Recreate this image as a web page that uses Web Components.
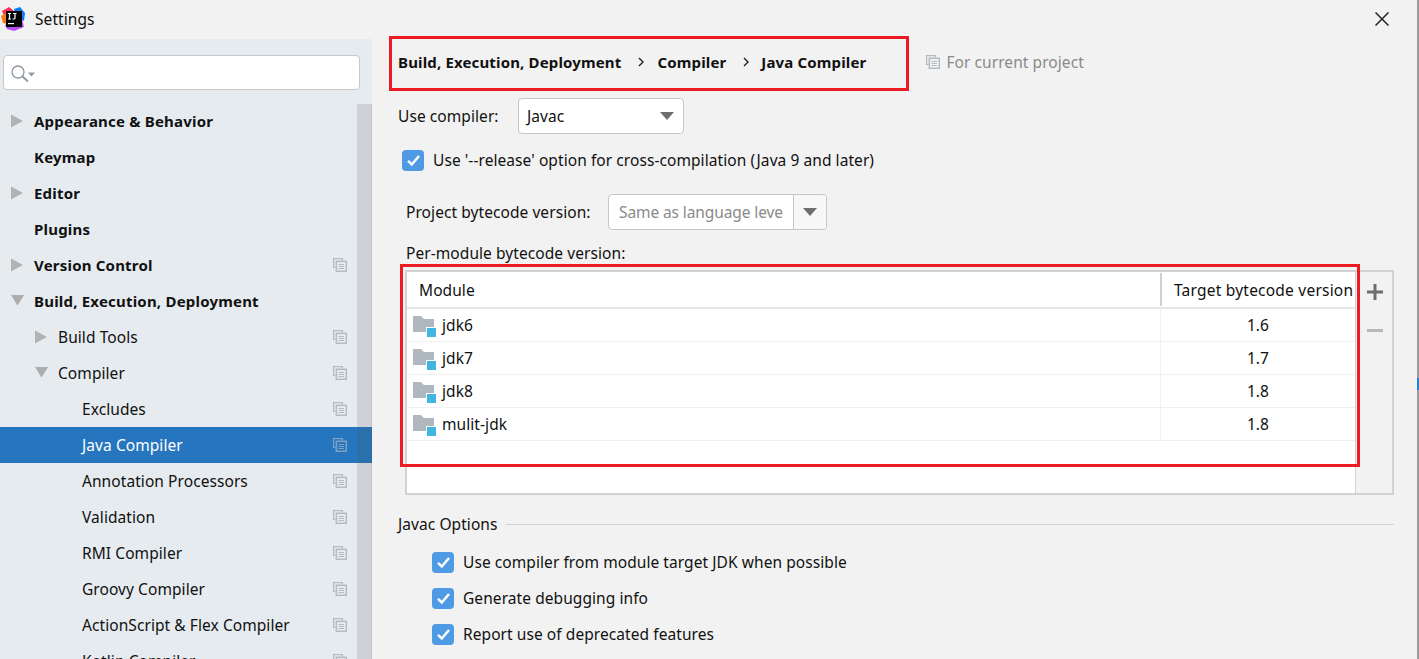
<!DOCTYPE html>
<html><head><meta charset="utf-8">
<style>
html,body{margin:0;padding:0;width:1419px;height:659px;overflow:hidden;background:#f2f2f2;font:15.5px "Noto Sans","Noto Sans CJK SC",sans-serif;letter-spacing:.07px;color:#111}
</style></head><body>
<settings-window></settings-window>
<script>
const copyIcon=`<svg style="display:block;flex:none" width="14" height="14" viewBox="0 0 14 14" fill="none" stroke="#b2bbc4"><path d="M9.500 2.500V.6H.6V9.500H2.500" stroke-width="1.200"/><rect x="3.300" y="3.300" width="10" height="10" stroke-width="1.500"/><path d="M5.500 6.500h5.500M5.500 8.500h5.500M5.500 10.500h5.500" stroke-width="1"/></svg>`;
function def(name,html,cls){customElements.define(name,class extends HTMLElement{constructor(){super();this.attachShadow({mode:'open'}).innerHTML=html;cls&&cls.call(this)}})}

def('tree-row',`<style>
:host{display:flex;align-items:center;height:36px;flex:none;position:relative;color:#111}
:host([sel]){background:#2675bf;color:#fff}
:host([bold]){font-weight:700;font-size:15px;letter-spacing:.2px}
.a{width:14px;height:14px;display:block;flex:none}
.t{white-space:nowrap}
.c{position:absolute;left:333px;top:11px;display:none}
:host([copy]) .c{display:block}
:host([sel]) .c{opacity:.65}
</style><span id="p" style="display:flex;align-items:center;flex:none"></span><span class="t"><slot></slot></span><span class="c">${copyIcon}</span>`,function(){
 const l=+(this.getAttribute('level')||0),ar=this.getAttribute('arrow');
 const p=this.shadowRoot.getElementById('p');
 const ind=34+l*24;p.style.width=ind+'px';
 if(ar){p.innerHTML=`<svg class="a" style="margin-left:${ind-23}px" viewBox="0 0 14 14"><path fill="${ar=='r'?'#b2b2b2':'#acacac'}" d="${ar=='r'?'M0 .5L12 7L0 13.500Z':'M0 1H13L6.500 11.500Z'}"/></svg>`}
});

def('side-bar',`<style>
:host{display:flex;flex-direction:column;width:372px;height:100%;background:#e6ebf0;flex:none;position:relative;overflow:hidden}
.s{margin:16px 0 13px 3px;width:357px;height:35px;box-sizing:border-box;background:#fff;border:1px solid #c8c8c8;border-radius:4px;flex:none;display:flex;align-items:center;padding-left:7px}
.tree{display:flex;flex-direction:column;flex:1;min-height:0}
.sb{position:absolute;left:357px;top:65px;bottom:0;width:15px;background:rgba(80,80,80,.16)}
.sb:after{content:"";position:absolute;right:0;top:0;bottom:0;width:1px;background:rgba(80,80,80,.1)}
</style><div class="s"><svg width="26" height="20" viewBox="0 0 26 20" fill="none"><circle cx="7" cy="9" r="6" stroke="#8f979e" stroke-width="1.300"/><path d="M11.500 13.500l5.500 5" stroke="#8f979e" stroke-width="1.800"/><path fill="#8f979e" d="M17 9.500h7L20.500 13.500Z"/></svg></div>
<div class="tree"><slot></slot></div><div class="sb"></div>`);

def('combo-box',`<style>
:host{display:inline-flex;height:36px;box-sizing:border-box;border:1px solid #c6c6c6;border-radius:4px;background:#fff;align-items:center;flex:none;position:relative;overflow:hidden}
.t{flex:1;padding-left:8px;white-space:nowrap;overflow:hidden}
:host([gray]) .t{color:#8a8a8a;padding-left:10px;letter-spacing:-.1px}
.b{width:32px;height:100%;display:flex;align-items:center;justify-content:center;flex:none}
:host([gray]) .b{border-left:1px solid #c6c6c6;background:#f7f7f7}
</style><span class="t"><slot></slot></span><span class="b"><svg width="14" height="8" viewBox="0 0 14 8"><path fill="#6e6e6e" d="M0 0H14L7 8Z"/></svg></span>`);

def('check-box',`<style>
:host{display:flex;align-items:center;height:36px;white-space:nowrap}
.b{width:22px;height:21px;background:#4f9ae4;border-radius:4px;display:flex;align-items:center;justify-content:center;margin-right:9px;flex:none}
</style><span class="b"><svg width="15" height="13" viewBox="0 0 15 13" fill="none"><path d="M2 6.800L5.800 10.500L13 2" stroke="#fff" stroke-width="2.500"/></svg></span><span><slot></slot></span>`);

def('module-row',`<style>
:host{display:flex;height:33px;box-sizing:border-box;border-bottom:1px solid #f0f0f0;align-items:stretch;flex:none}
.n{width:754px;box-sizing:border-box;border-right:1px solid #f0f0f0;display:flex;align-items:center;padding-left:6px;flex:none}
.v{flex:1;text-align:center;align-self:center}
svg{margin-right:6px;flex:none}
</style><span class="n"><svg width="23" height="23" viewBox="0 0 23 23"><path fill="#afb8bf" d="M0 2H8L11 5H21V18H0Z"/><rect x="13" y="13" width="10" height="10" fill="#fff"/><rect x="14" y="14" width="9" height="9" fill="#40b6e0"/></svg><slot name="n"></slot></span><span class="v"><slot name="v"></slot></span>`);

def('module-table',`<style>
:host{display:flex;width:989px;height:225px;box-sizing:border-box;border:2px solid #d2d2d2;background:#fff;flex:none}
.main{width:948px;display:flex;flex-direction:column;flex:none;background:#fff}
.h{display:flex;height:37px;box-sizing:border-box;border-bottom:2px solid #e6e6e6;flex:none;align-items:center}
.h1{width:753px;padding-left:12px;box-sizing:border-box;flex:none}
.h2{padding-left:12px;border-left:2px solid #cfcfcf;height:33px;display:flex;align-items:center;white-space:nowrap;box-sizing:border-box;flex:none;letter-spacing:.22px}
.tb{flex:1;background:#f2f2f2;border-left:1px solid #d2d2d2;display:flex;flex-direction:column;align-items:center;padding:12px 0 0 2px;gap:29px}
</style><div class="main"><div class="h"><span class="h1">Module</span><span class="h2">Target bytecode version</span></div><slot></slot></div>
<div class="tb"><svg width="16" height="16" viewBox="0 0 16 16"><path fill="#6e6e6e" d="M6.500 0h3v6.500h6.500v3h-6.500v6.500h-3v-6.500h-6.500v-3h6.500z"/></svg><svg width="16" height="4" viewBox="0 0 16 4"><rect width="16" height="3" y="0" fill="#b8b8b8"/></svg></div>`);

def('bread-crumbs',`<style>
:host{display:flex;align-items:center;height:46px;font-weight:700;font-size:15px;letter-spacing:.15px;white-space:nowrap;flex:none}
.p{font-weight:400;font-size:15.5px;letter-spacing:.07px;color:#8a8a8a;display:flex;align-items:center;gap:6px;margin-left:60px}
</style><span>Build, Execution, Deployment</span><svg style="margin:0 13px 0 17px;flex:none" width="6" height="10" viewBox="0 0 6 10" fill="none"><path d="M1 1l4 4-4 4" stroke="#222" stroke-width="1.400"/></svg><span>Compiler</span><svg style="margin:0 12px 0 17px;flex:none" width="6" height="10" viewBox="0 0 6 10" fill="none"><path d="M1 1l4 4-4 4" stroke="#222" stroke-width="1.400"/></svg><span>Java Compiler</span><span class="p">${copyIcon}For current project</span>`);

def('red-box',`<style>:host{display:block;position:absolute;box-sizing:border-box;border:3px solid #ed1c24;pointer-events:none}</style>`);

def('main-panel',`<style>
:host{display:flex;flex-direction:column;flex:1;min-width:0;padding:0 0 0 26px;position:relative;box-sizing:border-box}
.r{display:flex;align-items:center;flex:none}
.lbl{white-space:nowrap}
.sec{display:flex;align-items:center;gap:8px;height:20px;margin-top:19px;white-space:nowrap;width:996px;box-sizing:border-box}
.sec i{flex:1;height:1px;background:#d2d2d2}
</style>
<bread-crumbs></bread-crumbs>
<div class="r" style="margin-top:13px;height:36px"><span class="lbl" style="width:120px">Use compiler:</span><combo-box style="width:166px">Javac</combo-box></div>
<check-box style="margin:8px 0 0 4px">Use '--release' option for cross-compilation (Java 9 and later)</check-box>
<div class="r" style="margin:16px 0 0 8px;height:36px"><span class="lbl" style="width:202px">Project bytecode version:</span><combo-box gray style="width:219px">Same as language leve</combo-box></div>
<div class="lbl" style="margin:12px 0 0 8px;height:22px;line-height:22px">Per-module bytecode version:</div>
<module-table style="margin:6px 0 0 7px">
<module-row><span slot="n">jdk6</span><span slot="v">1.6</span></module-row>
<module-row><span slot="n">jdk7</span><span slot="v">1.7</span></module-row>
<module-row><span slot="n">jdk8</span><span slot="v">1.8</span></module-row>
<module-row><span slot="n">mulit-jdk</span><span slot="v">1.8</span></module-row>
</module-table>
<div class="sec"><span>Javac Options</span><i></i></div>
<check-box style="margin:10px 0 0 34px">Use compiler from module target JDK when possible</check-box>
<check-box style="margin:0 0 0 34px">Generate debugging info</check-box>
<check-box style="margin:0 0 0 34px">Report use of deprecated features</check-box>
<red-box style="left:17px;top:-3px;width:520px;height:55px"></red-box>
<red-box style="left:28px;top:225px;width:960px;height:203px"></red-box>
`);

def('title-bar',`<style>
:host{display:flex;align-items:center;height:39px;padding-bottom:2px;flex:none;position:relative;box-sizing:border-box}
.logo{margin-left:1px;margin-right:9px;flex:none}
.x{margin-left:auto;margin-right:30px;flex:none}
</style><svg class="logo" width="25" height="24" viewBox="0 0 25 24">
<path fill="#fe315d" d="M1 4L8 0L13 4L4 11Z"/><path fill="#f97a12" d="M0 9L5 6L8 17L2 16Z"/><path fill="#087cfa" d="M13 2L19 0L24 6L23 14L15 10Z"/><path fill="#b74af7" d="M4 18L21 12L23 20L13 24L6 22Z"/>
<rect x="5" y="4" width="16" height="16" fill="#000"/><rect x="7" y="16" width="6" height="1.200" fill="#fff"/><path d="M7 6.500h3M8.500 6.500v5.500M7 12h3M12 6.500h3.500M14 6.500v4.500q0 1-1 1h-1.500" stroke="#fff" stroke-width="1.200" fill="none"/></svg>
<span>Settings</span><svg class="x" width="14" height="14" viewBox="0 0 14 14" fill="none"><path d="M.5 .5L13.500 13.500M13.500 .5L.5 13.500" stroke="#222" stroke-width="1.500"/></svg>`);

def('settings-window',`<style>
:host{display:flex;flex-direction:column;width:1419px;height:659px;overflow:hidden;position:relative;background:#f2f2f2}
.body{display:flex;flex:1;min-height:0}
.edge{position:absolute;right:0;top:0;bottom:0;width:2px;background:linear-gradient(#9a9a9a 0 378px,#2a7fd0 378px 390px,#9a9a9a 390px)}
</style><title-bar></title-bar><div class="body">
<side-bar>
<tree-row bold arrow="r">Appearance &amp; Behavior</tree-row>
<tree-row bold>Keymap</tree-row>
<tree-row bold arrow="r">Editor</tree-row>
<tree-row bold>Plugins</tree-row>
<tree-row bold arrow="r" copy>Version Control</tree-row>
<tree-row bold arrow="d">Build, Execution, Deployment</tree-row>
<tree-row level="1" arrow="r" copy>Build Tools</tree-row>
<tree-row level="1" arrow="d" copy>Compiler</tree-row>
<tree-row level="2" copy>Excludes</tree-row>
<tree-row level="2" copy sel>Java Compiler</tree-row>
<tree-row level="2" copy>Annotation Processors</tree-row>
<tree-row level="2" copy>Validation</tree-row>
<tree-row level="2" copy>RMI Compiler</tree-row>
<tree-row level="2" copy>Groovy Compiler</tree-row>
<tree-row level="2" copy>ActionScript &amp; Flex Compiler</tree-row>
<tree-row level="2" copy>Kotlin Compiler</tree-row>
</side-bar>
<main-panel></main-panel>
</div><div class="edge"></div>`);
</script>
</body></html>
